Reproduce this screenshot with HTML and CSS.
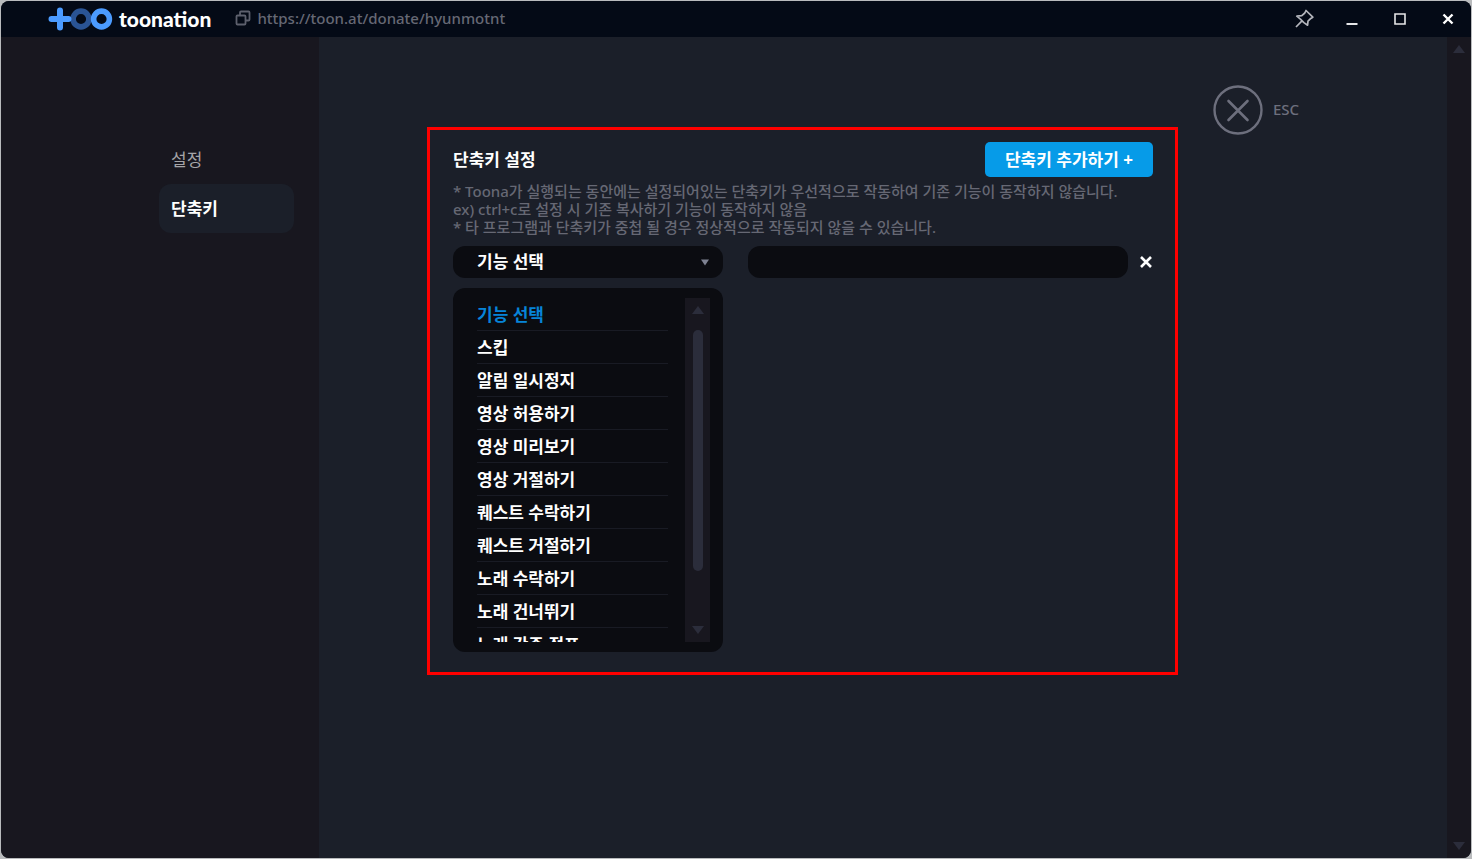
FILE: index.html
```html
<!DOCTYPE html>
<html lang="ko">
<head>
    <meta charset="UTF-8">
    <meta name="viewport" content="width=device-width, initial-scale=1.0">
    <title>toonation</title>
    <link rel="stylesheet" href="styles.css">
</head>
<body>
    <div class="window">
        <header class="titlebar">
            <div class="logo">
                <svg width="66" height="24" viewBox="0 0 66 24" aria-hidden="true">
                    <circle cx="34" cy="12" r="7.9" fill="none" stroke="#2a5494" stroke-width="5.6"/>
                    <path d="M13 3.5v17M4.5 12h17" fill="none" stroke="#4b9bff" stroke-width="6" stroke-linecap="round"/>
                    <circle cx="54.5" cy="12" r="7.9" fill="none" stroke="#4b9bff" stroke-width="5.6"/>
                </svg>
                <span>toonation</span>
            </div>
            <a class="url" href="https://toon.at/donate/hyunmotnt">
                <svg width="16" height="16" viewBox="0 0 16 16" aria-hidden="true">
                    <path d="M5 5V2.5Q5 1.5 6 1.5H13.5Q14.5 1.5 14.5 2.5V9.5Q14.5 10.5 13.5 10.5H11M2.5 5.5H9.5Q10.5 5.5 10.5 6.5V13.5Q10.5 14.5 9.5 14.5H2.5Q1.5 14.5 1.5 13.5V6.5Q1.5 5.5 2.5 5.5Z" fill="none" stroke="#5d606d" stroke-width="1.8"/>
                </svg>
                <span>https://toon.at/donate/hyunmotnt</span>
            </a>
            <div class="window-buttons">
                <button type="button" aria-label="고정">
                    <svg width="20" height="20" viewBox="0 0 20 20"><path d="M12 1.5L18.8 8.2L16.8 9.4L14 12.2L13.6 16.2L9.9 13.6L6.4 10.1L2.8 7.2L7.8 6.6L10.8 4Z M8 11.8L2 18" fill="none" stroke="#b4b6bc" stroke-width="1.7" stroke-linejoin="round"/></svg>
                </button>
                <button type="button" aria-label="최소화">
                    <svg width="20" height="20" viewBox="0 0 20 20"><path d="M4.5 15H15.5" stroke="#e6e6e8" stroke-width="1.8"/></svg>
                </button>
                <button type="button" aria-label="최대화">
                    <svg width="20" height="20" viewBox="0 0 20 20"><path d="M5 5H15V15H5Z" fill="none" stroke="#e6e6e8" stroke-width="1.6"/></svg>
                </button>
                <button type="button" aria-label="닫기">
                    <svg width="20" height="20" viewBox="0 0 20 20"><path d="M5.5 5.5L14.5 14.5M14.5 5.5L5.5 14.5" stroke="#fff" stroke-width="2.4"/></svg>
                </button>
            </div>
        </header>

        <div class="body">
            <nav class="sidebar">
                <a href="#settings">설정</a>
                <a href="#hotkeys" class="active">단축키</a>
            </nav>

            <main class="content">
                <section class="panel">
                    <div class="panel-head">
                        <h1>단축키 설정</h1>
                        <button type="button" class="add-button">단축키 추가하기 +</button>
                    </div>
                    <p class="notice">
                        * Toona가 실행되는 동안에는 설정되어있는 단축키가 우선적으로 작동하여 기존 기능이 동작하지 않습니다.<br>
                        ex) ctrl+c로 설정 시 기존 복사하기 기능이 동작하지 않음<br>
                        * 타 프로그램과 단축키가 중첩 될 경우 정상적으로 작동되지 않을 수 있습니다.
                    </p>
                    <div class="hotkey-row">
                        <select class="feature-select" aria-label="기능">
                            <option>기능 선택</option>
                        </select>
                        <input type="text" class="key-input" aria-label="단축키 입력">
                        <button type="button" class="remove-button" aria-label="삭제">
                            <svg width="14" height="14" viewBox="0 0 14 14"><path d="M2 2L12 12M12 2L2 12" stroke="#fff" stroke-width="2.6"/></svg>
                        </button>
                    </div>
                    <div class="dropdown">
                        <ul class="options">
                            <li><button type="button" class="selected">기능 선택</button></li>
                            <li><button type="button">스킵</button></li>
                            <li><button type="button">알림 일시정지</button></li>
                            <li><button type="button">영상 허용하기</button></li>
                            <li><button type="button">영상 미리보기</button></li>
                            <li><button type="button">영상 거절하기</button></li>
                            <li><button type="button">퀘스트 수락하기</button></li>
                            <li><button type="button">퀘스트 거절하기</button></li>
                            <li><button type="button">노래 수락하기</button></li>
                            <li><button type="button">노래 건너뛰기</button></li>
                            <li><button type="button">노래 간주 점프</button></li>
                        </ul>
                        <div class="scrollbar">
                            <span class="arrow-up"></span>
                            <span class="thumb"></span>
                            <span class="arrow-down"></span>
                        </div>
                    </div>
                </section>

                <button type="button" class="esc-button">
                    <svg width="50" height="50" viewBox="0 0 50 50" aria-hidden="true">
                        <circle cx="25" cy="25" r="23.5" fill="none" stroke="#6d6f7d" stroke-width="2.4"/>
                        <path d="M15.5 16L34.5 35M34.5 16L15.5 35" stroke="#6d6f7d" stroke-width="2.6" stroke-linecap="round"/>
                    </svg>
                    <span>ESC</span>
                </button>
            </main>

            <div class="scrollbar page-scrollbar">
                <span class="arrow-up"></span>
                <span class="arrow-down"></span>
            </div>
        </div>
    </div>
</body>
</html>
```
FILE: styles.css
```css
* {
    margin: 0;
    padding: 0;
    box-sizing: border-box;
}
body {
    min-height: 100vh;
    display: flex;
    padding: 1px;
    background: #b9bbbd;
    font-family: "Noto Sans", "Noto Sans CJK KR", sans-serif;
    font-size: 17px;
    color: #fff;
}
button, input, select {
    font: inherit;
    color: inherit;
    background: none;
    border: none;
}
button {
    cursor: pointer;
}
a {
    color: inherit;
    text-decoration: none;
}
svg {
    display: block;
    flex-shrink: 0;
}
.window {
    flex: 1;
    display: flex;
    flex-direction: column;
    border-radius: 8px;
    overflow: hidden;
    background: #1b1f29;
}

/* Title bar */
.titlebar {
    height: 36px;
    display: flex;
    align-items: center;
    padding: 0 13px 0 46px;
    background: #040a16;
}
.logo {
    display: flex;
    align-items: center;
    gap: 6px;
    padding-bottom: 1px;
    font-family: Lato, sans-serif;
    font-size: 21px;
    font-weight: 900;
    line-height: 22px;
}
.url {
    display: flex;
    align-items: center;
    gap: 6px;
    margin-left: 24px;
    padding-bottom: 3px;
    font-size: 15px;
    font-weight: 500;
    line-height: 20px;
    color: #666874;
}
.window-buttons {
    display: flex;
    gap: 28px;
    margin-left: auto;
}

/* Layout */
.body {
    flex: 1;
    display: flex;
}
.sidebar {
    width: 318px;
    padding: 98px 25px 0 158px;
    background: #18171f;
}
.sidebar a {
    display: block;
    padding: 0 12px;
    line-height: 49px;
    border-radius: 12px;
    color: #a5a5a8;
}
.sidebar a.active {
    background: #1b1f29;
    color: #fff;
    font-weight: 700;
}
.content {
    flex: 1;
    display: flex;
    align-items: flex-start;
    gap: 35px;
    padding: 48px 0 0 108px;
}
.esc-button {
    display: flex;
    align-items: center;
    gap: 10px;
    font-size: 15px;
    font-weight: 500;
    color: #6d6f7d;
}
.esc-button span {
    padding-bottom: 3px;
}

/* Hotkey panel */
.panel {
    flex: 0 1 751px;
    margin-top: 42px;
    padding: 12px 22px 20px 23px;
    border: 3px solid #f00;
}
.panel-head {
    display: flex;
    align-items: center;
    justify-content: space-between;
}
.panel-head h1 {
    padding-bottom: 2px;
    font-size: 17px;
    font-weight: 700;
}
.add-button {
    height: 35px;
    padding: 0 20px 2px;
    border-radius: 5px;
    background: #069be8;
    font-weight: 700;
}
.notice {
    margin-top: 5px;
    font-size: 15px;
    font-weight: 500;
    line-height: 18px;
    color: #666874;
}
.hotkey-row {
    display: flex;
    align-items: center;
    margin-top: 10px;
}
.feature-select {
    width: 270px;
    height: 32px;
    padding: 0 24px 2px;
    border-radius: 12px;
    appearance: none;
    background: #0b0c11 url("data:image/svg+xml,%3Csvg xmlns='http://www.w3.org/2000/svg' width='8' height='7'%3E%3Cpath d='M0 0.5H8L4 6.5Z' fill='%237e8292'/%3E%3C/svg%3E") no-repeat right 14px center;
    font-weight: 700;
}
.key-input {
    flex: 1;
    min-width: 0;
    height: 32px;
    margin-left: 25px;
    padding: 0 16px;
    border-radius: 12px;
    background: #0b0c11;
}
.remove-button {
    margin-left: 11px;
}

/* Dropdown list */
.dropdown {
    display: flex;
    gap: 17px;
    width: 270px;
    height: 364px;
    margin-top: 10px;
    padding: 10px 13px 10px 24px;
    border-radius: 12px;
    background: #0b0c11;
}
.options {
    flex: 1;
    overflow: hidden;
    list-style: none;
}
.options li {
    height: 33px;
    border-bottom: 1px solid #191b24;
}
.options button {
    width: 100%;
    height: 32px;
    padding-bottom: 2px;
    text-align: left;
    font-weight: 700;
}
.options .selected {
    color: #0784d8;
}
.scrollbar {
    width: 25px;
    display: flex;
    flex-direction: column;
    align-items: center;
    padding: 8px 0;
    background: #18171f;
}
.scrollbar .arrow-up {
    border: 6px solid transparent;
    border-top: none;
    border-bottom: 8px solid #2b2d3b;
}
.scrollbar .thumb {
    width: 10px;
    height: 241px;
    margin-top: 16px;
    border-radius: 5px;
    background: #2b2d3b;
}
.scrollbar .arrow-down {
    margin-top: auto;
    border: 6px solid transparent;
    border-bottom: none;
    border-top: 8px solid #2b2d3b;
}
.page-scrollbar {
    width: 24px;
}
```
